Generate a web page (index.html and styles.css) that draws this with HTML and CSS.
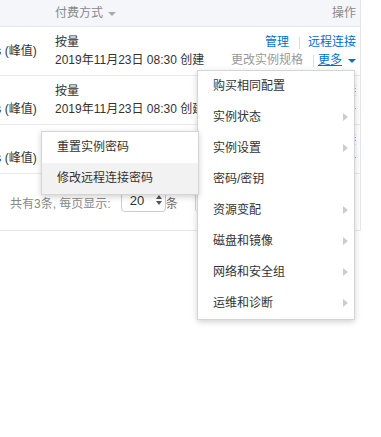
FILE: index.html
```html
<!DOCTYPE html>
<html lang="zh-CN">

<head>
    <meta charset="UTF-8">
    <meta name="viewport" content="width=device-width, initial-scale=1.0">
    <title>实例列表</title>
    <link rel="stylesheet" href="styles.css">
</head>

<body>
    <div class="table-wrap">
        <div class="row head">
            <div class="c1">带宽</div>
            <div class="c2">付费方式 <i class="caret gray"></i></div>
            <div class="c3">操作</div>
        </div>

        <div class="row">
            <div class="c1">1 Mbps (峰值)</div>
            <div class="c2">
                <div>按量</div>
                <div>2019年11月23日 08:30 创建</div>
            </div>
            <div class="c3">
                <div><a class="link">管理</a><span class="sep"></span><a class="link">远程连接</a></div>
                <div><span class="off">更改实例规格</span><span class="sep"></span><a class="link more">更多</a><i class="caret blue"></i></div>
            </div>
        </div>

        <div class="row">
            <div class="c1 low">1 Mbps (峰值)</div>
            <div class="c2">
                <div>按量</div>
                <div>2019年11月23日 08:30 创建</div>
            </div>
            <div class="c3">
                <div><a class="link">管理</a><span class="sep"></span><a class="link">远程连接</a></div>
                <div><span class="off">更改实例规格</span><span class="sep"></span><a class="link more">更多</a><i class="caret blue"></i></div>
            </div>
        </div>

        <div class="row">
            <div class="c1 low">1 Mbps (峰值)</div>
            <div class="c2">
                <div>按量</div>
                <div>2019年11月23日 08:30 创建</div>
            </div>
            <div class="c3">
                <div><a class="link">管理</a><span class="sep"></span><a class="link">远程连接</a></div>
                <div><span class="off">更改实例规格</span><span class="sep"></span><a class="link more">更多</a><i class="caret blue"></i></div>
            </div>
        </div>

        <div class="pager">
            <span class="total">共有3条, 每页显示:</span>
            <span class="size">20 <span class="spin"><i></i><i></i></span></span>
            <span>条</span>
            <span class="pages"></span>
        </div>
    </div>

    <!-- 更多 下拉菜单 -->
    <ul class="menu main">
        <li>购买相同配置</li>
        <li class="has-sub">实例状态</li>
        <li class="has-sub">实例设置</li>
        <li>密码/密钥</li>
        <li class="has-sub">资源变配</li>
        <li class="has-sub">磁盘和镜像</li>
        <li class="has-sub">网络和安全组</li>
        <li class="has-sub">运维和诊断</li>
    </ul>

    <!-- 密码/密钥 子菜单 -->
    <ul class="menu sub">
        <li>重置实例密码</li>
        <li class="active">修改远程连接密码</li>
    </ul>
</body>

</html>
```

FILE: styles.css
```css
/* 实例列表 */
body {
    margin: 0;
    padding: 0;
    font-family: "Liberation Sans", "Noto Sans CJK SC", sans-serif;
    font-size: 12px;
    color: #333;
    background: #fff;
    overflow: hidden;
    height: 437px;
    position: relative;
}

.table-wrap {
    margin-left: -46px;
    width: 407px;
    box-sizing: border-box;
    border-right: 1px solid #e3e6ec;
    border-bottom: 1px solid #e3e6ec;
}

.row {
    display: flex;
    align-items: center;
    height: 48px;
    line-height: 18px;
    border-bottom: 1px solid #e8e9ee;
    white-space: nowrap;
}

.row.head {
    height: 26px;
    background-color: #f5f6fa;
    color: #888;
    border-bottom-color: #e3e6ed;
}

.c1 {
    width: 93px;
    padding-left: 8px;
    overflow: hidden;
}

.c1.low {
    padding-top: 18px;
}

.c2 {
    flex: 1;
}

.c3 {
    padding-right: 4px;
    text-align: right;
}

.head .c1 {
    visibility: hidden;
}

.caret {
    display: inline-block;
    width: 0;
    height: 0;
    border-left: 4px solid transparent;
    border-right: 4px solid transparent;
    border-top: 4px solid #999;
    vertical-align: middle;
    margin-left: 2px;
}

.caret.gray {
    border-top-color: #aaa;
}

.caret.blue {
    border-top-color: #0070cc;
    margin-left: 6px;
}

.link {
    color: #0070cc;
    cursor: pointer;
}

.link.more {
    text-decoration: underline;
}

.off {
    color: #999;
}

.sep {
    display: inline-block;
    width: 1px;
    height: 12px;
    background-color: #ddd;
    vertical-align: middle;
    margin: 0 8px 0 10px;
}

.c3 div:last-child .sep {
    margin: 0 4px 0 10px;
}

.pager {
    height: 56px;
    display: flex;
    align-items: center;
    padding-left: 56px;
    color: #666;
    white-space: nowrap;
}

.total {
    color: #888;
    margin-right: 10px;
}

.size {
    display: inline-flex;
    align-items: center;
    box-sizing: border-box;
    width: 45px;
    height: 24px;
    border: 1px solid #ccc;
    border-radius: 4px;
    padding-left: 8px;
    font-size: 13px;
    color: #333;
    margin-top: -4px;
}

.spin {
    display: inline-flex;
    flex-direction: column;
    gap: 2px;
    margin-left: 12px;
}

.spin i {
    width: 0;
    height: 0;
    border-left: 3px solid transparent;
    border-right: 3px solid transparent;
}

.spin i:first-child {
    border-bottom: 4px solid #555;
}

.spin i:last-child {
    border-top: 4px solid #555;
}

.pages {
    display: inline-block;
    box-sizing: border-box;
    width: 40px;
    height: 24px;
    margin-left: 17px;
    margin-top: -4px;
    border: 1px solid #d9d9d9;
    border-radius: 3px;
}

/* 下拉菜单 */
.menu {
    position: absolute;
    list-style: none;
    margin: 0;
    padding: 0;
    width: 158px;
    box-sizing: border-box;
    background-color: #fff;
    border: 1px solid #d5d5d5;
    box-shadow: 0 2px 6px rgba(0, 0, 0, 0.18);
}

.menu li {
    position: relative;
    height: 31px;
    line-height: 31px;
    padding-left: 15px;
    color: #333;
    white-space: nowrap;
}

.menu li.has-sub::after {
    content: "";
    position: absolute;
    right: 6px;
    top: 11px;
    border-top: 4.5px solid transparent;
    border-bottom: 4.5px solid transparent;
    border-left: 5px solid #ccc;
}

.menu li.active {
    background-color: #f2f2f2;
}

.main {
    left: 197px;
    top: 70px;
}

.sub {
    left: 41px;
    top: 131px;
    height: 64px;
}
```
